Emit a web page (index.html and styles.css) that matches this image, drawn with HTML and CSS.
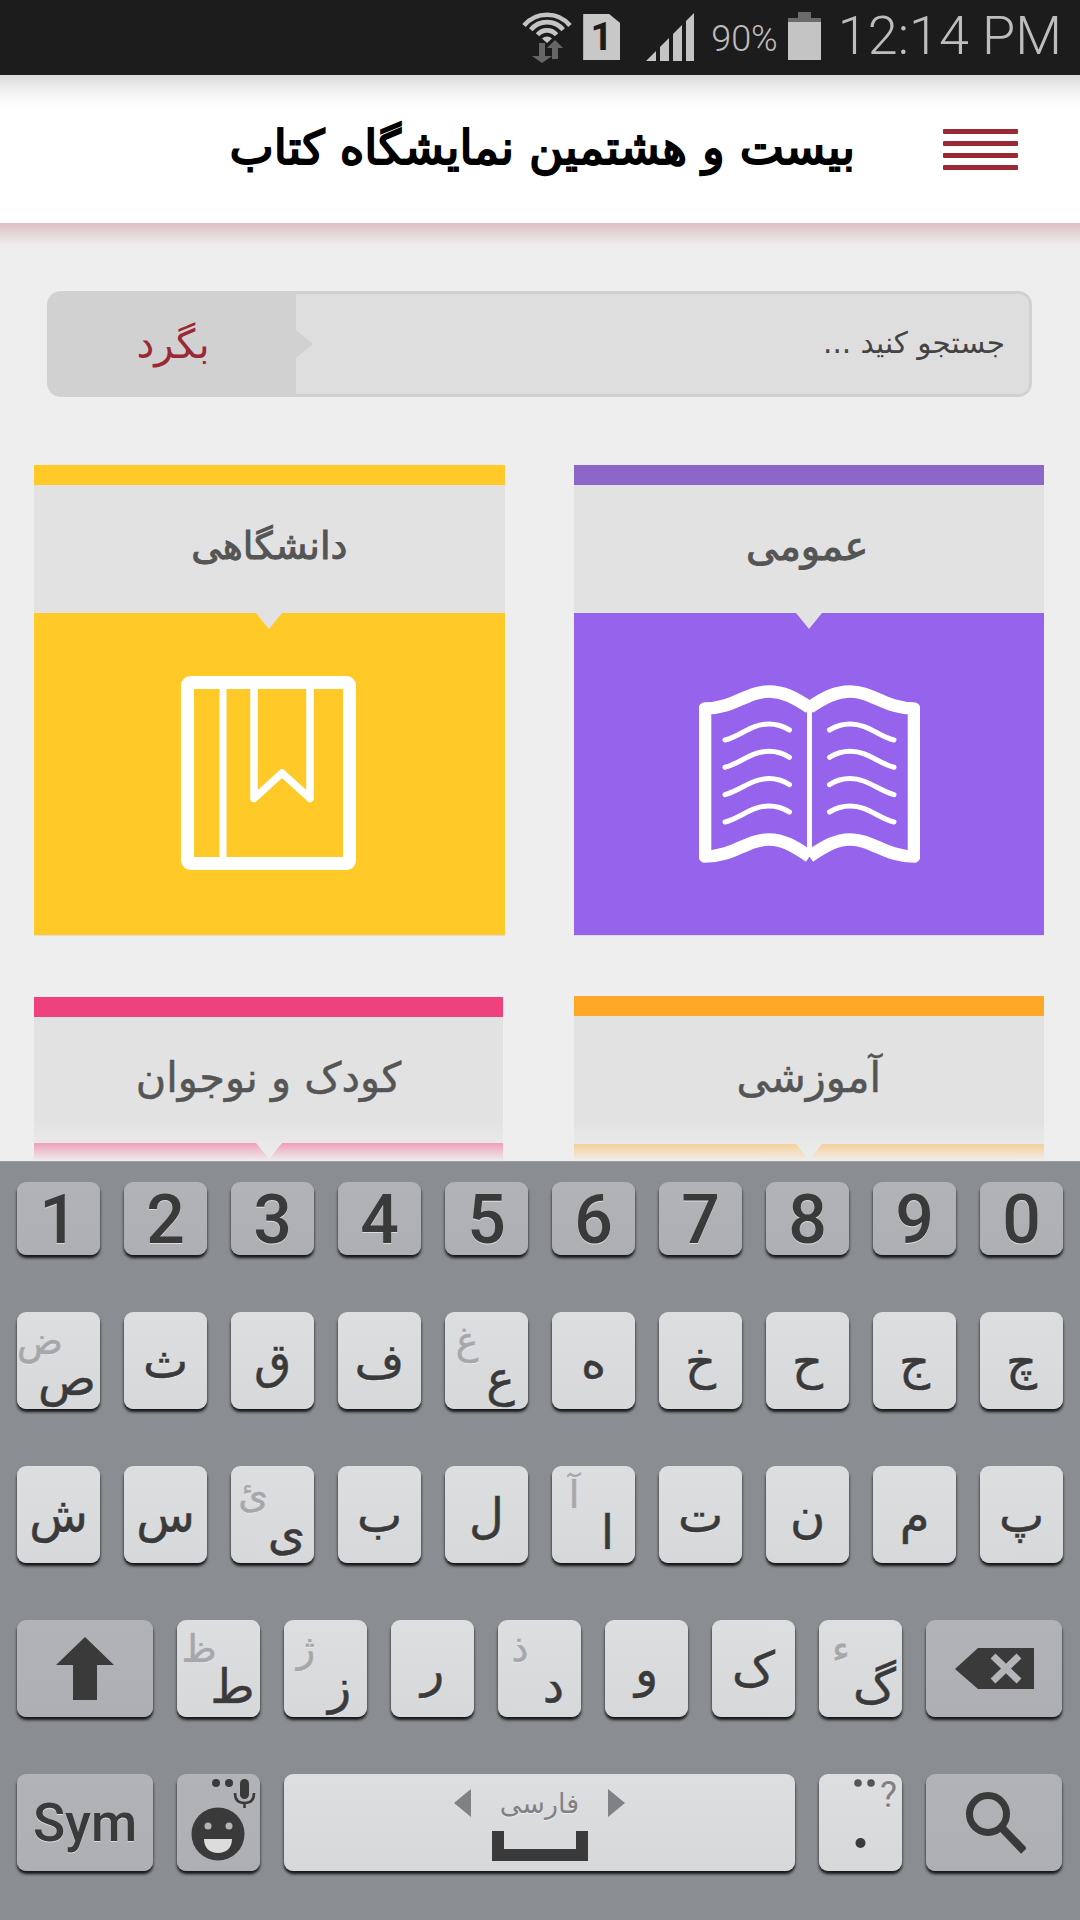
FILE: index.html
```html
<!DOCTYPE html>
<html lang="fa">
<head>
<meta charset="utf-8">
<title>بیست و هشتمین نمایشگاه کتاب</title>
<link rel="stylesheet" href="styles.css">
</head>
<body>
<div class="screen">
  <div class="status">
    <svg class="st-wifi" width="50" height="53" viewBox="0 0 50 53">
      <g fill="none" stroke="#c4c4c4" stroke-width="4.6">
        <path d="M2 15.5A30 30 0 0 1 48 15.5"/>
        <path d="M8.8 19.8A21 21 0 0 1 41.2 19.8"/>
        <path d="M15.5 24.8A12.5 12.5 0 0 1 34.5 24.8"/>
      </g>
      <path d="M20 28.5A7 7 0 0 1 30 28.5L25 33Z" fill="#c4c4c4"/>
      <path d="M17 33h6v13h7l-10 7-10-7h7Z" fill="#666"/>
      <path d="M33 30l8 8h-5v11h-6V38h-5Z" fill="#666"/>
    </svg>
    <div class="st-sim">1</div>
    <svg class="st-signal" width="48" height="48" viewBox="0 0 48 48" fill="#c4c4c4">
      <path d="M0 48L10 38V48Z"/>
      <path d="M14 48V34L23 25V48Z"/>
      <path d="M27 48V21L36 12V48Z"/>
      <path d="M40 48V8L48 0V48Z"/>
    </svg>
    <span class="st-pct">90%</span>
    <svg class="st-batt" width="33" height="48" viewBox="0 0 33 48">
      <path d="M10 0H23V6H33V10H0V6H10Z" fill="#6b6b6b"/>
      <rect y="10" width="33" height="38" fill="#c4c4c4"/>
    </svg>
    <span class="st-time">12:14 PM</span>
  </div>

  <header class="topbar">
    <div class="burger"><i></i><i></i><i></i><i></i></div>
    <h1 class="title">بیست و هشتمین نمایشگاه کتاب</h1>
  </header>

  <main class="content">
    <div class="search">
      <div class="search-field">جستجو کنید ...</div>
      <div class="search-btn">بگرد</div>
    </div>

    <div class="cards">
      <section class="card card--purple">
        <div class="card-label">عمومی</div>
        <div class="card-body">
          <svg class="icon-book" width="221" height="178" viewBox="0 0 221 178">
            <defs>
              <g id="page">
                <path d="M110.5 22.5C95 12 84 6.5 70 6.5C47 6.5 35 23.5 6 23.5V171.5C35 171.5 47 154.5 70 154.5C84 154.5 95 161 110.5 171.5" fill="none" stroke="#fff" stroke-width="12.6" stroke-linejoin="round"/>
                <g fill="none" stroke="#fff" stroke-width="5" stroke-linecap="round">
                  <path d="M26 55C42 51 52 39 70 39C78 39 84 41 90.5 45"/>
                  <path d="M26 82.300C42 78.300 52 66.300 70 66.300C78 66.300 84 68.300 90.500 72.300"/>
                  <path d="M26 109.600C42 105.600 52 93.600 70 93.600C78 93.600 84 95.600 90.500 99.600"/>
                  <path d="M26 137C42 133 52 121 70 121C78 121 84 123 90.500 127"/>
                </g>
              </g>
            </defs>
            <use href="#page"/>
            <use href="#page" transform="matrix(-1 0 0 1 221 0)"/>
            <rect x="108" y="22" width="5" height="150" fill="#fff"/>
          </svg>
        </div>
      </section>

      <section class="card card--yellow">
        <div class="card-label">دانشگاهی</div>
        <div class="card-body">
          <svg class="icon-mark" width="175" height="194" viewBox="0 0 175 194" fill="none" stroke="#fff" stroke-linejoin="round">
            <rect x="6.500" y="6.500" width="162" height="181" rx="3" stroke-width="13"/>
            <path d="M42 8V186" stroke-width="7"/>
            <path d="M73 8V122.500L101 97L129 122.500V8" stroke-width="7.500"/>
          </svg>
        </div>
      </section>

      <section class="card card--orange card--plain">
        <div class="card-label">آموزشی</div>
        <div class="card-body"></div>
      </section>

      <section class="card card--pink card--plain card--inset">
        <div class="card-label">کودک و نوجوان</div>
        <div class="card-body"></div>
      </section>
    </div>
    <div class="fade"></div>
  </main>

  <div class="keyboard">
    <div class="kb-row kb-row--digits">
      <div class="key key--fn key--digit">1</div>
      <div class="key key--fn key--digit">2</div>
      <div class="key key--fn key--digit">3</div>
      <div class="key key--fn key--digit">4</div>
      <div class="key key--fn key--digit">5</div>
      <div class="key key--fn key--digit">6</div>
      <div class="key key--fn key--digit">7</div>
      <div class="key key--fn key--digit">8</div>
      <div class="key key--fn key--digit">9</div>
      <div class="key key--fn key--digit">0</div>
    </div>
    <div class="kb-row">
      <div class="key key--alt key--alt-broad"><span class="alt">ض</span>ص</div>
      <div class="key">ث</div>
      <div class="key">ق</div>
      <div class="key">ف</div>
      <div class="key key--alt"><span class="alt">غ</span>ع</div>
      <div class="key">ه</div>
      <div class="key">خ</div>
      <div class="key">ح</div>
      <div class="key">ج</div>
      <div class="key">چ</div>
    </div>
    <div class="kb-row">
      <div class="key">ش</div>
      <div class="key">س</div>
      <div class="key key--alt"><span class="alt">ئ</span>ی</div>
      <div class="key">ب</div>
      <div class="key">ل</div>
      <div class="key key--alt"><span class="alt">آ</span>ا</div>
      <div class="key">ت</div>
      <div class="key">ن</div>
      <div class="key">م</div>
      <div class="key">پ</div>
    </div>
    <div class="kb-row">
      <div class="key key--fn key--wide">
        <svg width="58" height="63" viewBox="0 0 58 63"><path d="M29 0L58 28H41V63H17V28H0Z" fill="#3a3a3b"/></svg>
      </div>
      <div class="key key--alt"><span class="alt">ظ</span>ط</div>
      <div class="key key--alt"><span class="alt">ژ</span>ز</div>
      <div class="key">ر</div>
      <div class="key key--alt"><span class="alt">ذ</span>د</div>
      <div class="key">و</div>
      <div class="key">ک</div>
      <div class="key key--alt"><span class="alt">ء</span>گ</div>
      <div class="key key--fn key--wide">
        <svg width="79" height="41" viewBox="0 0 79 41"><path d="M23 0H79V41H23L0 21Z" fill="#3a3a3b"/><path d="M38 8L64 33M64 8L38 33" stroke="#b4b5b8" stroke-width="7" fill="none"/></svg>
      </div>
    </div>
    <div class="kb-row">
      <div class="key key--fn key--wide key--sym">Sym</div>
      <div class="key key--fn">
        <svg width="83" height="97" viewBox="0 0 83 97">
          <circle cx="41" cy="60" r="26.500" fill="#3a3a3b"/>
          <circle cx="31" cy="52" r="3.500" fill="#b4b5b8"/>
          <circle cx="52" cy="52" r="3.500" fill="#b4b5b8"/>
          <path d="M27 65H55C55 74 49 79 41 79C33 79 27 74 27 65Z" fill="#dcdcdc"/>
          <circle cx="39" cy="9" r="4" fill="#3a3a3b"/>
          <circle cx="52" cy="9" r="4" fill="#3a3a3b"/>
          <rect x="63" y="5" width="9" height="20" rx="4.500" fill="#3a3a3b"/>
          <path d="M58 19C58 26 62 29 67.500 29C73 29 77 26 77 19M67.500 29V34" fill="none" stroke="#3a3a3b" stroke-width="2.600"/>
        </svg>
      </div>
      <div class="key key--space">
        <div class="space-lang">
          <svg width="17" height="28" viewBox="0 0 17 28"><path d="M17 0V28L0 14Z" fill="#808184"/></svg>
          <span class="space-name">فارسی</span>
          <svg width="17" height="28" viewBox="0 0 17 28"><path d="M0 0V28L17 14Z" fill="#808184"/></svg>
        </div>
        <svg class="space-bar" width="96" height="30" viewBox="0 0 96 30"><path d="M0 0H12V18H84V0H96V30H0Z" fill="#3a3a3b"/></svg>
      </div>
      <div class="key key--period">
        <svg width="83" height="97" viewBox="0 0 83 97">
          <circle cx="39" cy="9" r="3.800" fill="#555"/>
          <circle cx="52" cy="9" r="3.800" fill="#555"/>
          <text class="period-q" x="69.500" y="33" text-anchor="middle">?</text>
          <circle cx="41.500" cy="69" r="5" fill="#3a3a3b"/>
        </svg>
      </div>
      <div class="key key--fn key--wide key--find">
        <svg width="60" height="62" viewBox="0 0 60 62" fill="none" stroke="#3a3a3b">
          <circle cx="22" cy="22" r="18.500" stroke-width="7"/>
          <path d="M35 35L58 59" stroke-width="8"/>
        </svg>
      </div>
    </div>
  </div>
</div>
</body>
</html>
```
FILE: styles.css
```css
* { box-sizing: border-box; }
html, body { margin: 0; padding: 0; }
body { width: 1080px; height: 1920px; overflow: hidden; background: #eee; font-family: "DejaVu Sans", sans-serif; }
.screen { display: flex; flex-direction: column; width: 1080px; height: 1920px; }

/* status bar */
.status { flex: 0 0 75px; height: 75px; background: #1c1c1c; display: flex; align-items: flex-start; justify-content: flex-end; padding-right: 18px; color: #bdbdbd; font-family: Roboto, sans-serif; font-weight: 300; }
.st-wifi { margin-top: 10px; }
.st-sim { width: 37px; height: 46px; margin: 14px 0 0 11px; background: #c8c8c8; clip-path: polygon(0 0, 26px 0, 100% 9px, 100% 100%, 0 100%); color: #1c1c1c; font-size: 39px; font-weight: 700; line-height: 46px; text-align: center; }
.st-signal { margin: 13px 0 0 26px; }
.st-pct { margin: 19px 0 0 17px; font-size: 36px; line-height: 40px; }
.st-batt { margin: 12px 0 0 10px; }
.st-time { margin: 6px 0 0 17px; font-size: 54px; line-height: 60px; }

/* top bar */
.topbar { flex: 0 0 148px; height: 148px; direction: rtl; background: linear-gradient(#d9d9d9 0, #f4f4f4 18px, #fff 34px); display: flex; align-items: center; padding: 0 62px 0 0; gap: 88px; }
.burger { width: 75px; display: flex; flex-direction: column; gap: 7px; }
.burger i { display: block; height: 5px; background: #9b2835; border-radius: 1px; }
.title { margin: 0 0 2px; font-size: 47px; font-weight: 400; -webkit-text-stroke: 1.9px #000; color: #000; line-height: 60px; }

/* content */
.content { flex: 1; min-height: 0; position: relative; overflow: hidden; direction: rtl; background: linear-gradient(#dcc0c4 0, #eee 22px); padding-top: 68px; }
.search { height: 106px; margin: 0 48px 68px 47px; display: flex; background: #d1d1d1; border: 3px solid #d1d1d1; border-radius: 14px; }
.search-field { flex: 1; background: #dedede; border-radius: 0 10px 10px 0; display: flex; align-items: center; padding: 0 24px 3px 0; font-size: 29.5px; color: #444; }
.search-btn { flex: 0 0 246px; position: relative; display: flex; align-items: center; justify-content: center; font-size: 40px; color: #9b2835; }
.search-btn::after { content: ""; position: absolute; left: 100%; top: 50%; margin-top: -14px; border-style: solid; border-width: 14px 0 14px 17px; border-color: transparent transparent transparent #d1d1d1; }

.cards { display: grid; grid-template-columns: 1fr 1fr; column-gap: 69px; row-gap: 61px; padding: 0 36px 0 34px; }
.card { height: 470px; display: flex; flex-direction: column; border-top: 20px solid var(--stripe); }
.card-label { flex: 0 0 128px; position: relative; background: #e2e2e2; display: flex; align-items: center; justify-content: center; padding-bottom: 6px; font-size: 40px; font-weight: 400; -webkit-text-stroke: 1px #555; color: #555; }
.card-label::after { content: ""; position: absolute; top: 100%; left: 50%; margin-left: -13px; border-style: solid; border-width: 16px 13px 0; border-color: #e2e2e2 transparent transparent; }
.card--purple .card-label { padding-right: 3px; }
.card--yellow .card-label { font-size: 38px; }
.card--plain .card-label { font-size: 41.5px; -webkit-text-stroke: .5px #555; }
.card-body { flex: 1; background: var(--body); box-shadow: 0 1px 0 #ddd; display: flex; align-items: center; justify-content: center; }
.icon-book { margin-left: 1px; }
.icon-mark { margin: 0 2px 2px 0; }
.card--purple { --stripe: #8c66c9; --body: #9664ec; }
.card--yellow { --stripe: #ffca28; --body: #ffca28; }
.card--orange { --stripe: #ffa726; --body: #ffa726; }
.card--pink { --stripe: #ee417e; --body: #ee417e; }
.card--inset { margin-top: 1px; width: 469px; justify-self: end; }
.card--inset .card-label { flex-basis: 126px; }
.fade { position: absolute; left: 0; right: 0; bottom: 0; height: 41px; background: linear-gradient(rgba(238,238,238,0), rgba(238,238,238,.55) 56%, #eee 100%); }

/* keyboard */
.keyboard { flex: 0 0 759px; height: 759px; background: #8a8d92; border-top: 1px solid #9a9da1; padding: 20px 17px 0; display: flex; flex-direction: column; gap: 57px; }
.kb-row { display: flex; gap: 24px; height: 97px; }
.kb-row--digits { height: 73px; }
.key { flex: 0 0 83px; min-width: 0; position: relative; border-radius: 9px; background: linear-gradient(#dddee0, #d6d8da); box-shadow: 0 3px 3px #141416; display: flex; align-items: center; justify-content: center; font-size: 48px; line-height: 1; color: #3a3a3b; -webkit-text-stroke: .5px #3a3a3b; text-shadow: 0 1px 0 rgba(255,255,255,.55); }
.key--fn { background: linear-gradient(#b2b3b7, #aeafb3); }
.key--wide { flex-basis: 136px; }
.key--digit { font: 500 68px Roboto, sans-serif; padding-top: 3px; -webkit-text-stroke: 0; }
.key--sym { font: 500 53px Roboto, sans-serif; -webkit-text-stroke: 0; }
.key--find { padding-left: 3px; }
.key--alt { padding: 34px 0 0 28px; line-height: 40px; }
.key--alt-broad { padding-left: 17px; }
.alt { position: absolute; top: 14px; left: 0; width: 44px; text-align: center; font-size: 38px; line-height: 30px; color: #a6a7aa; -webkit-text-stroke: .5px #a6a7aa; }
.key--space { flex: 0 0 511px; flex-direction: column; justify-content: flex-start; padding-top: 15px; -webkit-text-stroke: 0; }
.space-lang { display: flex; align-items: center; gap: 29px; }
.space-name { font-size: 27px; color: #808184; }
.space-bar { margin-top: 14px; }
.period-q { font: 400 36px Roboto, sans-serif; fill: #808184; stroke: none; }
```
